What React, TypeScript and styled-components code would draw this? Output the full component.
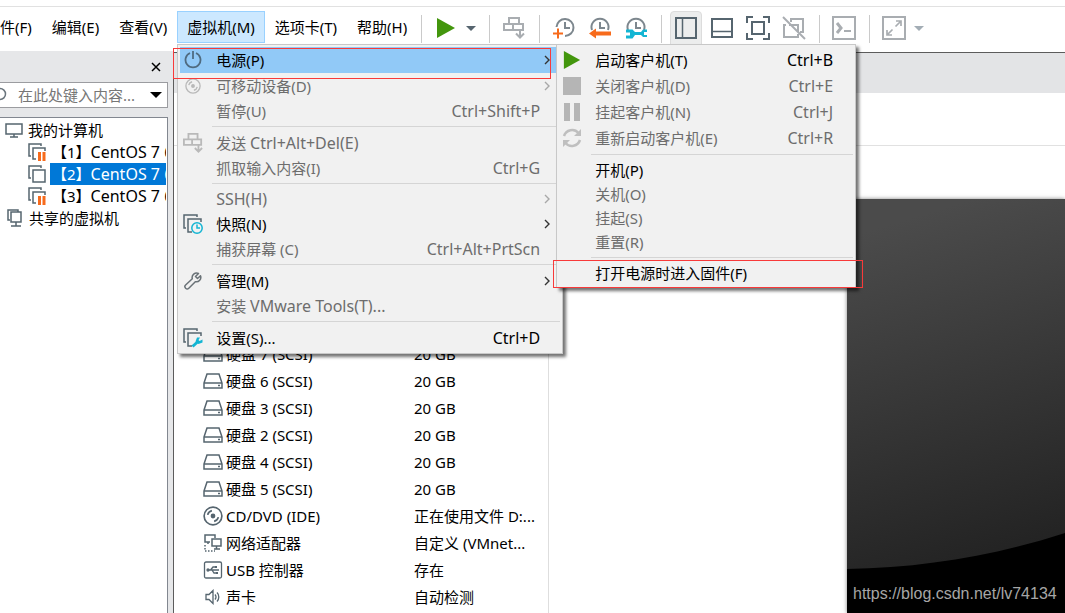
import React from 'react';
import styled, { createGlobalStyle, css } from 'styled-components';

const GlobalStyle = createGlobalStyle`
  *, *::before, *::after { box-sizing: border-box; }
  html, body { margin: 0; padding: 0; }
  body {
    background: #fff;
    color: #000;
    font: 15px/22px "Noto Sans", "Noto Sans CJK SC", sans-serif;
    overflow: hidden;
  }
  button, input { font: inherit; color: inherit; }
  button { border: 0; background: none; padding: 0; text-align: left; white-space: nowrap; }
  svg { display: block; flex: none; }
`;

const SLATE = '#56656f';
const MUTED = '#a9adb1';
const FAINT = '#b9b9b9';
const ORANGE = '#f76b1c';
const CYAN = '#13b5d3';

const Window = styled.div`
  display: flex;
  flex-direction: column;
  min-height: 100vh;
  overflow: hidden;
`;

const TopBar = styled.header`
  display: flex;
  align-items: flex-start;
  height: 45px;
  margin-top: 6px;
  border-top: 1px solid #e1e1e1;
  padding-top: 4px;
`;

const MenuNav = styled.nav`
  display: flex;
  flex: none;
  margin: 0 -3px 0 -25px;
`;

const MenuSlot = styled.div`
  position: relative;
`;

const MenuTitle = styled.button<{ $open?: boolean }>`
  height: 32px;
  padding: 0 9px;
  border: 1px solid transparent;
  ${(p) => p.$open && css`
    background: #cce8ff;
    border-color: #99d1ff;
  `}
`;

const Divider = styled.span`
  flex: none;
  width: 1px;
  height: 28px;
  margin: 4px 6px 0 7px;
  background: #cacaca;
`;

const ToolSet = styled.div`
  display: flex;
  flex: none;
`;

const Tool = styled.button`
  display: flex;
  align-items: center;
  justify-content: center;
  width: 36px;
  height: 34px;
`;

const ActiveTool = styled(Tool)`
  width: 32px;
  margin: 0 2px;
  background: #eceded;
  border: 1px solid #dcdcdc;
  border-radius: 4px 4px 0 0;
`;

const CaretTool = styled(Tool)`
  width: 14px;
  margin-right: 4px;
`;

const Workspace = styled.div`
  display: flex;
  flex: 1;
`;

const Sidebar = styled.aside`
  display: flex;
  flex-direction: column;
  flex: none;
  width: 173px;
  padding-right: 5px;
  background: #e6e7e9;
`;

const SidebarHead = styled.div`
  display: flex;
  justify-content: flex-end;
  height: 31px;
  padding: 11px 7px 0 0;
`;

const CloseButton = styled.button`
  width: 10px;
  height: 10px;
`;

const SearchBox = styled.div`
  display: flex;
  align-items: center;
  height: 26px;
  background: #fff;
  border: 1px solid #9b9ca0;
  border-left: 0;
  padding-right: 5px;
`;

const SearchInput = styled.input`
  flex: 1;
  min-width: 0;
  border: 0;
  outline: 0;
  padding: 0 0 0 10px;
  background: none;
  &::placeholder { color: #767676; opacity: 1; }
`;

const Tree = styled.ul`
  flex: 1;
  list-style: none;
  margin: 9px 0 0;
  padding: 1px 1px 0 0;
  background: #fff;
  border: 1px solid #828790;
  border-width: 1px 1px 0 0;
`;

const TreeRow = styled.li<{ $child?: boolean }>`
  display: flex;
  align-items: center;
  height: 22px;
  padding-left: ${(p) => (p.$child ? 28 : 5)}px;
  overflow: hidden;
  white-space: nowrap;
`;

const TreeLabel = styled.span<{ $indent?: boolean; $selected?: boolean }>`
  flex: 1;
  overflow: hidden;
  margin-left: 4px;
  padding-left: ${(p) => (p.$indent ? 2 : 0)}px;
  background: ${(p) => (p.$selected ? '#0078d7' : 'transparent')};
  color: ${(p) => (p.$selected ? '#fff' : '#000')};
`;

const Latin = styled.span`
  font-size: 16px;
`;

const Main = styled.main`
  display: flex;
  flex-direction: column;
  flex: 1;
  min-width: 0;
  margin-top: 1px;
  border-left: 1px solid #5c5c5c;
  border-top: 1px solid #5c5c5c;
`;

const TabStrip = styled.div`
  height: 40px;
  background: #e3e4e6;
`;

const TitleStrip = styled.div`
  height: 53px;
  border-bottom: 1px solid #e1e1e1;
`;

const Summary = styled.div`
  display: flex;
  flex: 1;
`;

const HardwarePanel = styled.section`
  flex: none;
  width: 375px;
  padding: 194px 0 3px 29px;
  border-right: 1px solid #dedede;
`;

const HardwareTable = styled.table`
  border-collapse: collapse;
  td { padding: 0; height: 27px; white-space: nowrap; }
  td:first-child { width: 211px; }
`;

const Device = styled.span`
  display: flex;
  align-items: center;
  gap: 3px;
`;

const Preview = styled.section`
  display: flex;
  flex-direction: column;
  justify-content: flex-end;
  position: relative;
  flex: 1;
  margin: 53px 0 0 298px;
  background: linear-gradient(163deg, #4b4b4b 8%, #232323 84%);
  box-shadow: 0 0 4px rgba(0, 0, 0, 0.5);
`;

const Horizon = styled.svg`
  width: 100%;
  height: 36px;
`;

const Watermark = styled.p`
  height: 44px;
  margin: 0;
  padding: 15px 6px 0;
  background: #000;
  color: #a6a6a6;
  font: 16px/20px "Liberation Sans", sans-serif;
  white-space: nowrap;
`;

const Popup = styled.div<{ $nested?: boolean }>`
  position: absolute;
  z-index: 2;
  padding: 2px;
  background: #f1f1f1;
  border: 1px solid #c8c8c8;
  box-shadow: 3px 3px 3px rgba(0, 0, 0, 0.55);
  ${(p) => p.$nested
    ? css`left: 376px; top: -3px; width: 300px;`
    : css`left: 0; top: 33px; width: 386px;`}
`;

const ItemSlot = styled.div`
  position: relative;
`;

const Item = styled.button<{ $compact?: boolean; $dim?: boolean; $lit?: boolean }>`
  display: flex;
  align-items: center;
  width: 100%;
  height: ${(p) => (p.$compact ? 24 : 26)}px;
  color: ${(p) => (p.$dim ? '#6d6d6d' : '#000')};
  background: ${(p) => (p.$lit ? '#91c9f7' : 'transparent')};
`;

const ItemIcon = styled.span`
  display: flex;
  justify-content: center;
  flex: none;
  width: 26px;
  margin-right: 10px;
`;

const ItemLabel = styled.span`
  flex: 1;
`;

const Shortcut = styled(Latin)`
  margin-right: 20px;
`;

const Arrow = styled.svg`
  margin-right: 10px;
`;

const Rule = styled.hr`
  height: 1px;
  margin: 3px 0 3px 32px;
  border: 0;
  background: #d5d5d5;
`;

const Outline = styled.span<{ $last?: boolean }>`
  position: absolute;
  z-index: 3;
  border: 1px solid #f83a3a;
  pointer-events: none;
  ${(p) => p.$last
    ? css`inset: -1px -10px -3px -6px;`
    : css`left: -7px; top: 1px; width: 378px; height: 31px;`}
`;

/* ---------- icons ---------- */

const Caret = ({ color, w = 10 }: { color: string; w?: number }) => (
  <svg width={w} height={w / 2} viewBox="0 0 10 5"><path d="M0 0h10L5 5z" fill={color} /></svg>
);

const Play = ({ size = 20 }: { size?: number }) => (
  <svg width={size} height={size} viewBox="0 0 20 20"><path d="M1 0l18 10L1 20z" fill="#43960d" /></svg>
);

const SendKeys = ({ color, size = 22 }: { color: string; size?: number }) => (
  <svg width={size} height={size} viewBox="0 0 22 22" fill="none" stroke={color} strokeWidth="2">
    <path d="M6 1h10v6H6zM1 7h9v6H1zM10 7h10v6H10z" />
    <path d="M17 13v7M13 16.500l4 4 4-4" />
  </svg>
);

const ClockFace = () => (
  <g fill="none" stroke="#7d878e" strokeWidth="2"><path d="M3 13A8.500 8.500 0 1 1 19 13" /><path d="M11 5v6h5" /></g>
);

const ClockAdd = () => (
  <svg width="22" height="22" viewBox="0 0 22 22">
    <path d="M3.500 10a8.500 8.500 0 1 1 8.500 9" fill="none" stroke="#7d878e" strokeWidth="2" />
    <path d="M12 5v6h5" fill="none" stroke="#7d878e" strokeWidth="2" />
    <path d="M5 11.500v10M0 16.500h10" stroke={ORANGE} strokeWidth="2" />
  </svg>
);

const ClockBack = () => (
  <svg width="22" height="22" viewBox="0 0 22 22">
    <ClockFace />
    <path d="M0 16.500l7-5v3h15v4H7v3z" fill={ORANGE} />
  </svg>
);

const ClockManage = () => (
  <svg width="22" height="22" viewBox="0 0 22 22">
    <ClockFace />
    <path
      d="M1 12.500h6.500l2.500 2.500h6l2-2.500h4v2.500h-3v3h3v2h-4l-2-2h-6l-2.500 3.500H1v-3h4v-3H1z"
      fill={CYAN}
    />
  </svg>
);

const PanelLeft = () => (
  <svg width="22" height="22" viewBox="0 0 22 22" fill="none" stroke={SLATE} strokeWidth="2"><path d="M1 1h20v20H1z" /><path d="M7.500 1v20" strokeWidth="1.500" /></svg>
);

const PanelBottom = () => (
  <svg width="22" height="22" viewBox="0 0 22 22" fill="none" stroke={SLATE} strokeWidth="2"><path d="M1 2h20v18H1z" /><path d="M1 14.500h20" strokeWidth="1.500" /></svg>
);

const FitGuest = () => (
  <svg width="24" height="24" viewBox="0 0 24 24" fill="none" stroke={SLATE} strokeWidth="2">
    <path d="M6 6h12v12H6zM1 7V1h6M17 1h6v6M23 17v6h-6M7 23H1v-6" />
  </svg>
);

const Unity = () => (
  <svg width="24" height="24" viewBox="0 0 24 24" fill="none" stroke={MUTED} strokeWidth="2">
    <path d="M9 6V3h12v13h-3M4 9H2v12h14v-3M7 9h9v7" /><path d="M1 1l22 22" />
  </svg>
);

const Terminal = () => (
  <svg width="24" height="24" viewBox="0 0 24 24" fill="none" stroke={MUTED} strokeWidth="2">
    <path d="M1 1h22v22H1z" /><path d="M5 7l4 5-4 5" strokeWidth="3" /><path d="M12 15h7" />
  </svg>
);

const FullScreen = () => (
  <svg width="24" height="24" viewBox="0 0 24 24" fill="none" stroke={MUTED} strokeWidth="2">
    <path d="M1 1h22v22H1z" />
    <path d="M14 5h5v5M19 5l-5.500 5.500M10 19H5v-5M5 19l5.500-5.500" strokeWidth="1.700" />
  </svg>
);

const Power = () => (
  <svg width="18" height="18" viewBox="0 0 18 18" fill="none" stroke="#4f6b80" strokeWidth="1.800">
    <path d="M6 2a7.500 7.500 0 1 0 6 0M9 0v8" />
  </svg>
);

const Disc = ({ color, size }: { color: string; size: number }) => (
  <svg width={size} height={size} viewBox="0 0 18 18" fill="none" stroke={color} strokeWidth="1.500">
    <circle cx="9" cy="9" r="8" /><circle cx="9" cy="9" r="1.400" fill={color} />
    <path d="M4.200 8A5 5 0 0 1 8 4.200M13.800 10a5 5 0 0 1-3.800 3.800" />
  </svg>
);

const Snapshot = () => (
  <svg width="20" height="20" viewBox="0 0 20 20" fill="none" stroke={SLATE} strokeWidth="1.500">
    <path d="M3 14H1V1h13v2M9 18H5V5h13v3" />
    <circle cx="14" cy="14" r="5.200" stroke={CYAN} /><path d="M14 10.500V14h3" stroke={CYAN} />
  </svg>
);

const Settings = () => (
  <svg width="20" height="20" viewBox="0 0 20 20" fill="none" stroke={SLATE} strokeWidth="1.500">
    <path d="M3 14H1V1h13v2M9 18H5V5h13v3" />
    <path d="M9.500 18.500l5-4.500" stroke={CYAN} strokeWidth="3" />
    <path d="M14 9.500l-1.500 4 3 2.500 4-1.500v-3l-3 1.500-1-1 1.500-2.500z" fill={CYAN} stroke="none" />
  </svg>
);

const Wrench = () => (
  <svg width="18" height="18" viewBox="0 0 18 18" fill="none" stroke="#6a7277" strokeWidth="1.500" strokeLinejoin="round">
    <path d="M14.500 1.500a4.500 4.500 0 0 0-6.200 5.300L1.600 13a2.200 2.200 0 0 0 3.200 3.200l6.500-6.500a4.500 4.500 0 0 0 5.200-6L13.500 6.500l-2-2z" />
  </svg>
);

const StopIcon = () => (
  <svg width="18" height="18"><path d="M0 0h18v18H0z" fill="#b5b5b5" /></svg>
);

const PauseIcon = () => (
  <svg width="16" height="18"><path d="M0 0h6v18H0zM10 0h6v18h-6z" fill="#b5b5b5" /></svg>
);

const Restart = () => (
  <svg width="20" height="20" viewBox="0 0 20 20" fill="none" stroke="#bfbfbf" strokeWidth="2.500">
    <path d="M2 8a8.500 8.500 0 0 1 14.500-3M18 12A8.500 8.500 0 0 1 3.500 15" />
    <path d="M19 1v7h-7zM1 19v-7h7z" fill="#bfbfbf" stroke="none" />
  </svg>
);

const Computer = () => (
  <svg width="19" height="15" viewBox="0 0 19 15" fill="none" stroke={SLATE} strokeWidth="1.500">
    <path d="M1 1h16v10H1zM9 11v3M5 14h8" />
  </svg>
);

const Vm = ({ paused }: { paused?: boolean }) => (
  <svg width="18" height="18" viewBox="0 0 18 18" fill="none" stroke={SLATE} strokeWidth="1.500">
    {paused
      ? <><path d="M3 13H1V1h12v2M8 16H5V5h12v3" /><path d="M11.500 9v9M16 9v9" stroke={ORANGE} strokeWidth="3" /></>
      : <path d="M3 13H1V1h12v2M5 5h12v12H5z" />}
  </svg>
);

const SharedVm = () => (
  <svg width="20" height="18" viewBox="0 0 20 18" fill="none" stroke={SLATE} strokeWidth="1.500">
    <path d="M5 11H3V1h10v2M6 3h10v10H6zM11 13v4M6 17h10" />
  </svg>
);

const Drive = () => (
  <svg width="20" height="16" viewBox="0 0 20 16" fill="none" stroke={SLATE} strokeWidth="1.500">
    <path d="M1 10L4 1h12l3 9v5H1zM1 10h18" /><path d="M15 12.500h2" />
  </svg>
);

const Network = () => (
  <svg width="20" height="18" viewBox="0 0 20 18" fill="none" stroke={SLATE} strokeWidth="1.500">
    <path d="M7 8H2V1h10v3M9 5h9v7H9zM13.500 12v3M11 15h6M5 8v2" /><path d="M2 11v6M2 17h10" strokeDasharray="1.500 1.500" />
  </svg>
);

const Usb = () => (
  <svg width="20" height="18" viewBox="0 0 20 18" fill="none" stroke={SLATE} strokeWidth="1.300">
    <rect x="1.500" y="1" width="17" height="16" rx="1.500" />
    <path d="M5 9h11M7.500 9l2.500-3h2M9 9l2 3h2" /><circle cx="5" cy="9" r="1" fill={SLATE} /><path d="M12 5h2v2h-2zM13 11h2v2h-2z" fill={SLATE} stroke="none" />
  </svg>
);

const Sound = () => (
  <svg width="20" height="16" viewBox="0 0 20 16" fill="none" stroke={SLATE} strokeWidth="1.300">
    <path d="M3 5.500h3l4-4v13l-4-4H3zM12 5.500a4 4 0 0 1 0 5M14 3.500a6.500 6.500 0 0 1 0 9" />
  </svg>
);

/* ---------- data ---------- */

type Entry = {
  label: string;
  latin?: string;
  icon?: React.ReactNode;
  keys?: string;
  dim?: boolean;
  arrow?: boolean;
  compact?: boolean;
};

const guestEntries: Entry[][] = [
  [
    { label: '启动客户机(T)', keys: 'Ctrl+B', icon: <Play size={18} /> },
    { label: '关闭客户机(D)', keys: 'Ctrl+E', icon: <StopIcon />, dim: true },
    { label: '挂起客户机(N)', keys: 'Ctrl+J', icon: <PauseIcon />, dim: true },
    { label: '重新启动客户机(E)', keys: 'Ctrl+R', icon: <Restart />, dim: true },
  ],
  [
    { label: '开机(P)', compact: true },
    { label: '关机(O)', compact: true, dim: true },
    { label: '挂起(S)', compact: true, dim: true },
    { label: '重置(R)', compact: true, dim: true },
  ],
];

const vmEntries: Entry[][] = [
  [
    { label: '可移动设备(D)', icon: <Disc color={FAINT} size={16} />, dim: true, arrow: true },
    { label: '暂停(U)', keys: 'Ctrl+Shift+P', dim: true, compact: true },
  ],
  [
    { label: '发送 ', latin: 'Ctrl+Alt+Del(E)', icon: <SendKeys color={FAINT} size={20} />, dim: true },
    { label: '抓取输入内容(I)', keys: 'Ctrl+G', dim: true, compact: true },
  ],
  [
    { label: '', latin: 'SSH(H)', dim: true, arrow: true, compact: true },
    { label: '快照(N)', icon: <Snapshot />, arrow: true },
    { label: '捕获屏幕 (C)', keys: 'Ctrl+Alt+PrtScn', dim: true, compact: true },
  ],
  [
    { label: '管理(M)', icon: <Wrench />, arrow: true },
    { label: '安装 ', latin: 'VMware Tools(T)...', dim: true, compact: true },
  ],
  [{ label: '设置(S)...', icon: <Settings />, keys: 'Ctrl+D' }],
];

const devices: [React.ReactNode, string, string][] = [
  ...['7', '6', '3', '2', '4', '5'].map(
    (n): [React.ReactNode, string, string] => [<Drive />, `硬盘 ${n} (SCSI)`, '20 GB'],
  ),
  [<Disc color={SLATE} size={20} />, 'CD/DVD (IDE)', '正在使用文件 D:...'],
  [<Network />, '网络适配器', '自定义 (VMnet...'],
  [<Usb />, 'USB 控制器', '存在'],
  [<Sound />, '声卡', '自动检测'],
];

const MenuEntry = ({ entry, lit }: { entry: Entry; lit?: boolean }) => (
  <Item role="menuitem" $compact={entry.compact} $dim={entry.dim} $lit={lit}>
    <ItemIcon>{entry.icon}</ItemIcon>
    <ItemLabel>{entry.label}{entry.latin && <Latin>{entry.latin}</Latin>}</ItemLabel>
    {entry.keys && <Shortcut>{entry.keys}</Shortcut>}
    {entry.arrow && (
      <Arrow width="6" height="10" viewBox="0 0 6 10" fill="none" stroke={entry.dim ? '#a8a8a8' : '#333'} strokeWidth="1.400">
        <path d="M1 1l4 4-4 4" />
      </Arrow>
    )}
  </Item>
);

const GuestMenu = () => (
  <Popup $nested role="menu" aria-label="电源">
    {guestEntries.map((group, i) => (
      <React.Fragment key={i}>
        {group.map((e) => <MenuEntry key={e.label} entry={e} />)}
        <Rule />
      </React.Fragment>
    ))}
    <ItemSlot>
      <MenuEntry entry={{ label: '打开电源时进入固件(F)', compact: true }} />
      <Outline $last />
    </ItemSlot>
  </Popup>
);

const VmMenu = () => (
  <Popup role="menu" aria-label="虚拟机">
    <ItemSlot>
      <MenuEntry lit entry={{ label: '电源(P)', icon: <Power />, arrow: true }} />
      <Outline />
      <GuestMenu />
    </ItemSlot>
    {vmEntries.map((group, i) => (
      <React.Fragment key={i}>
        {i > 0 && <Rule />}
        {group.map((e) => <MenuEntry key={e.label} entry={e} />)}
      </React.Fragment>
    ))}
  </Popup>
);

export default function App() {
  return (
    <Window>
      <GlobalStyle />
      <TopBar>
        <MenuNav>
          <MenuTitle>文件(F)</MenuTitle>
          <MenuTitle>编辑(E)</MenuTitle>
          <MenuTitle>查看(V)</MenuTitle>
          <MenuSlot>
            <MenuTitle $open>虚拟机(M)</MenuTitle>
            <VmMenu />
          </MenuSlot>
          <MenuTitle>选项卡(T)</MenuTitle>
          <MenuTitle>帮助(H)</MenuTitle>
        </MenuNav>
        <Divider />
        <ToolSet>
          <Tool aria-label="Power on"><Play /></Tool>
          <CaretTool aria-label="Power options"><Caret color="#56656f" /></CaretTool>
        </ToolSet>
        <Divider />
        <Tool aria-label="Send keys"><SendKeys color={MUTED} /></Tool>
        <Divider />
        <ToolSet>
          <Tool aria-label="Take snapshot"><ClockAdd /></Tool>
          <Tool aria-label="Revert snapshot"><ClockBack /></Tool>
          <Tool aria-label="Manage snapshots"><ClockManage /></Tool>
        </ToolSet>
        <Divider />
        <ToolSet>
          <ActiveTool aria-label="Library"><PanelLeft /></ActiveTool>
          <Tool aria-label="Thumbnails"><PanelBottom /></Tool>
          <Tool aria-label="Fit guest"><FitGuest /></Tool>
          <Tool aria-label="Unity"><Unity /></Tool>
        </ToolSet>
        <Divider />
        <Tool aria-label="Console"><Terminal /></Tool>
        <Divider />
        <ToolSet>
          <Tool aria-label="Full screen"><FullScreen /></Tool>
          <CaretTool aria-label="Full screen options"><Caret color="#a3adb5" /></CaretTool>
        </ToolSet>
      </TopBar>
      <Workspace>
        <Sidebar>
          <SidebarHead>
            <CloseButton aria-label="Close">
              <svg width="10" height="10" viewBox="0 0 10 10" stroke="#000" strokeWidth="1.500"><path d="M1 1l8 8M9 1L1 9" /></svg>
            </CloseButton>
          </SidebarHead>
          <SearchBox>
            <svg width="8" height="18" viewBox="0 0 8 18" fill="none" stroke="#6a757d" strokeWidth="1.500"><circle cx="0" cy="8" r="5.500" /></svg>
            <SearchInput aria-label="搜索" placeholder="在此处键入内容..." />
            <Caret color="#000" w={12} />
          </SearchBox>
          <Tree>
            <TreeRow><Computer /><TreeLabel>我的计算机</TreeLabel></TreeRow>
            <TreeRow $child><Vm paused /><TreeLabel $indent>【1】<Latin>CentOS 7 64</Latin></TreeLabel></TreeRow>
            <TreeRow $child><Vm /><TreeLabel $indent $selected>【2】<Latin>CentOS 7 64</Latin></TreeLabel></TreeRow>
            <TreeRow $child><Vm paused /><TreeLabel $indent>【3】<Latin>CentOS 7 64</Latin></TreeLabel></TreeRow>
            <TreeRow><SharedVm /><TreeLabel>共享的虚拟机</TreeLabel></TreeRow>
          </Tree>
        </Sidebar>
        <Main>
          <TabStrip />
          <TitleStrip />
          <Summary>
            <HardwarePanel>
              <HardwareTable>
                <tbody>
                  {devices.map(([icon, name, value]) => (
                    <tr key={name}>
                      <td><Device>{icon}{name}</Device></td>
                      <td>{value}</td>
                    </tr>
                  ))}
                </tbody>
              </HardwareTable>
            </HardwarePanel>
            <Preview>
              <Horizon viewBox="0 0 218 36" preserveAspectRatio="none">
                <path d="M0 36C76 35 150 22 218 0V36z" fill="#000" />
              </Horizon>
              <Watermark>https://blog.csdn.net/lv74134</Watermark>
            </Preview>
          </Summary>
        </Main>
      </Workspace>
    </Window>
  );
}
